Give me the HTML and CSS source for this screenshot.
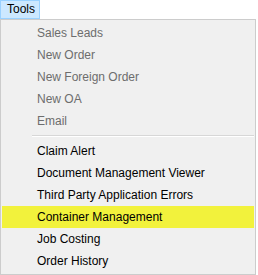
FILE: index.html
```html
<!DOCTYPE html>
<html lang="en">
<head>
  <meta charset="UTF-8">
  <title>Tools menu</title>
  <link rel="stylesheet" href="styles.css">
</head>
<body>

  <div class="menubar">
    <span class="menubar-item open">Tools</span>
  </div>

  <ul class="dropdown">
    <li class="disabled">Sales Leads</li>
    <li class="disabled">New Order</li>
    <li class="disabled">New Foreign Order</li>
    <li class="disabled">New OA</li>
    <li class="disabled">Email</li>
    <li class="separator"></li>
    <li>Claim Alert</li>
    <li>Document Management Viewer</li>
    <li>Third Party Application Errors</li>
    <li class="hot">Container Management</li>
    <li>Job Costing</li>
    <li>Order History</li>
  </ul>

</body>
</html>
```

FILE: styles.css
```css
body {
  margin: 0;
  background: #ffffff;
  font-family: 'Liberation Sans', Arial, sans-serif;
  font-size: 12px;
  color: #000;
}

.menubar {
  display: flex;
  height: 19px;
}

.menubar-item {
  padding: 0 4px 0 6px;
  line-height: 17px;
  border: 1px solid #99d1ff;
}

.menubar-item.open {
  background-color: #cce8ff;
}

.dropdown {
  list-style: none;
  margin: 0;
  width: 252px;
  padding: 2px 1px;
  background-color: #f0f0f0;
  border: 1px solid #cccccc;
}

.dropdown li {
  height: 22px;
  line-height: 22px;
  padding-left: 35px;
  white-space: nowrap;
}

.dropdown li.disabled {
  color: #6d6d6d;
}

.dropdown li.hot {
  background-color: #f2f23c;
}

.dropdown li.separator {
  height: 1px;
  margin: 3px 0 3px 30px;
  padding: 0;
  background-color: #d7d7d7;
  border-bottom: 1px solid #ffffff;
}
```
